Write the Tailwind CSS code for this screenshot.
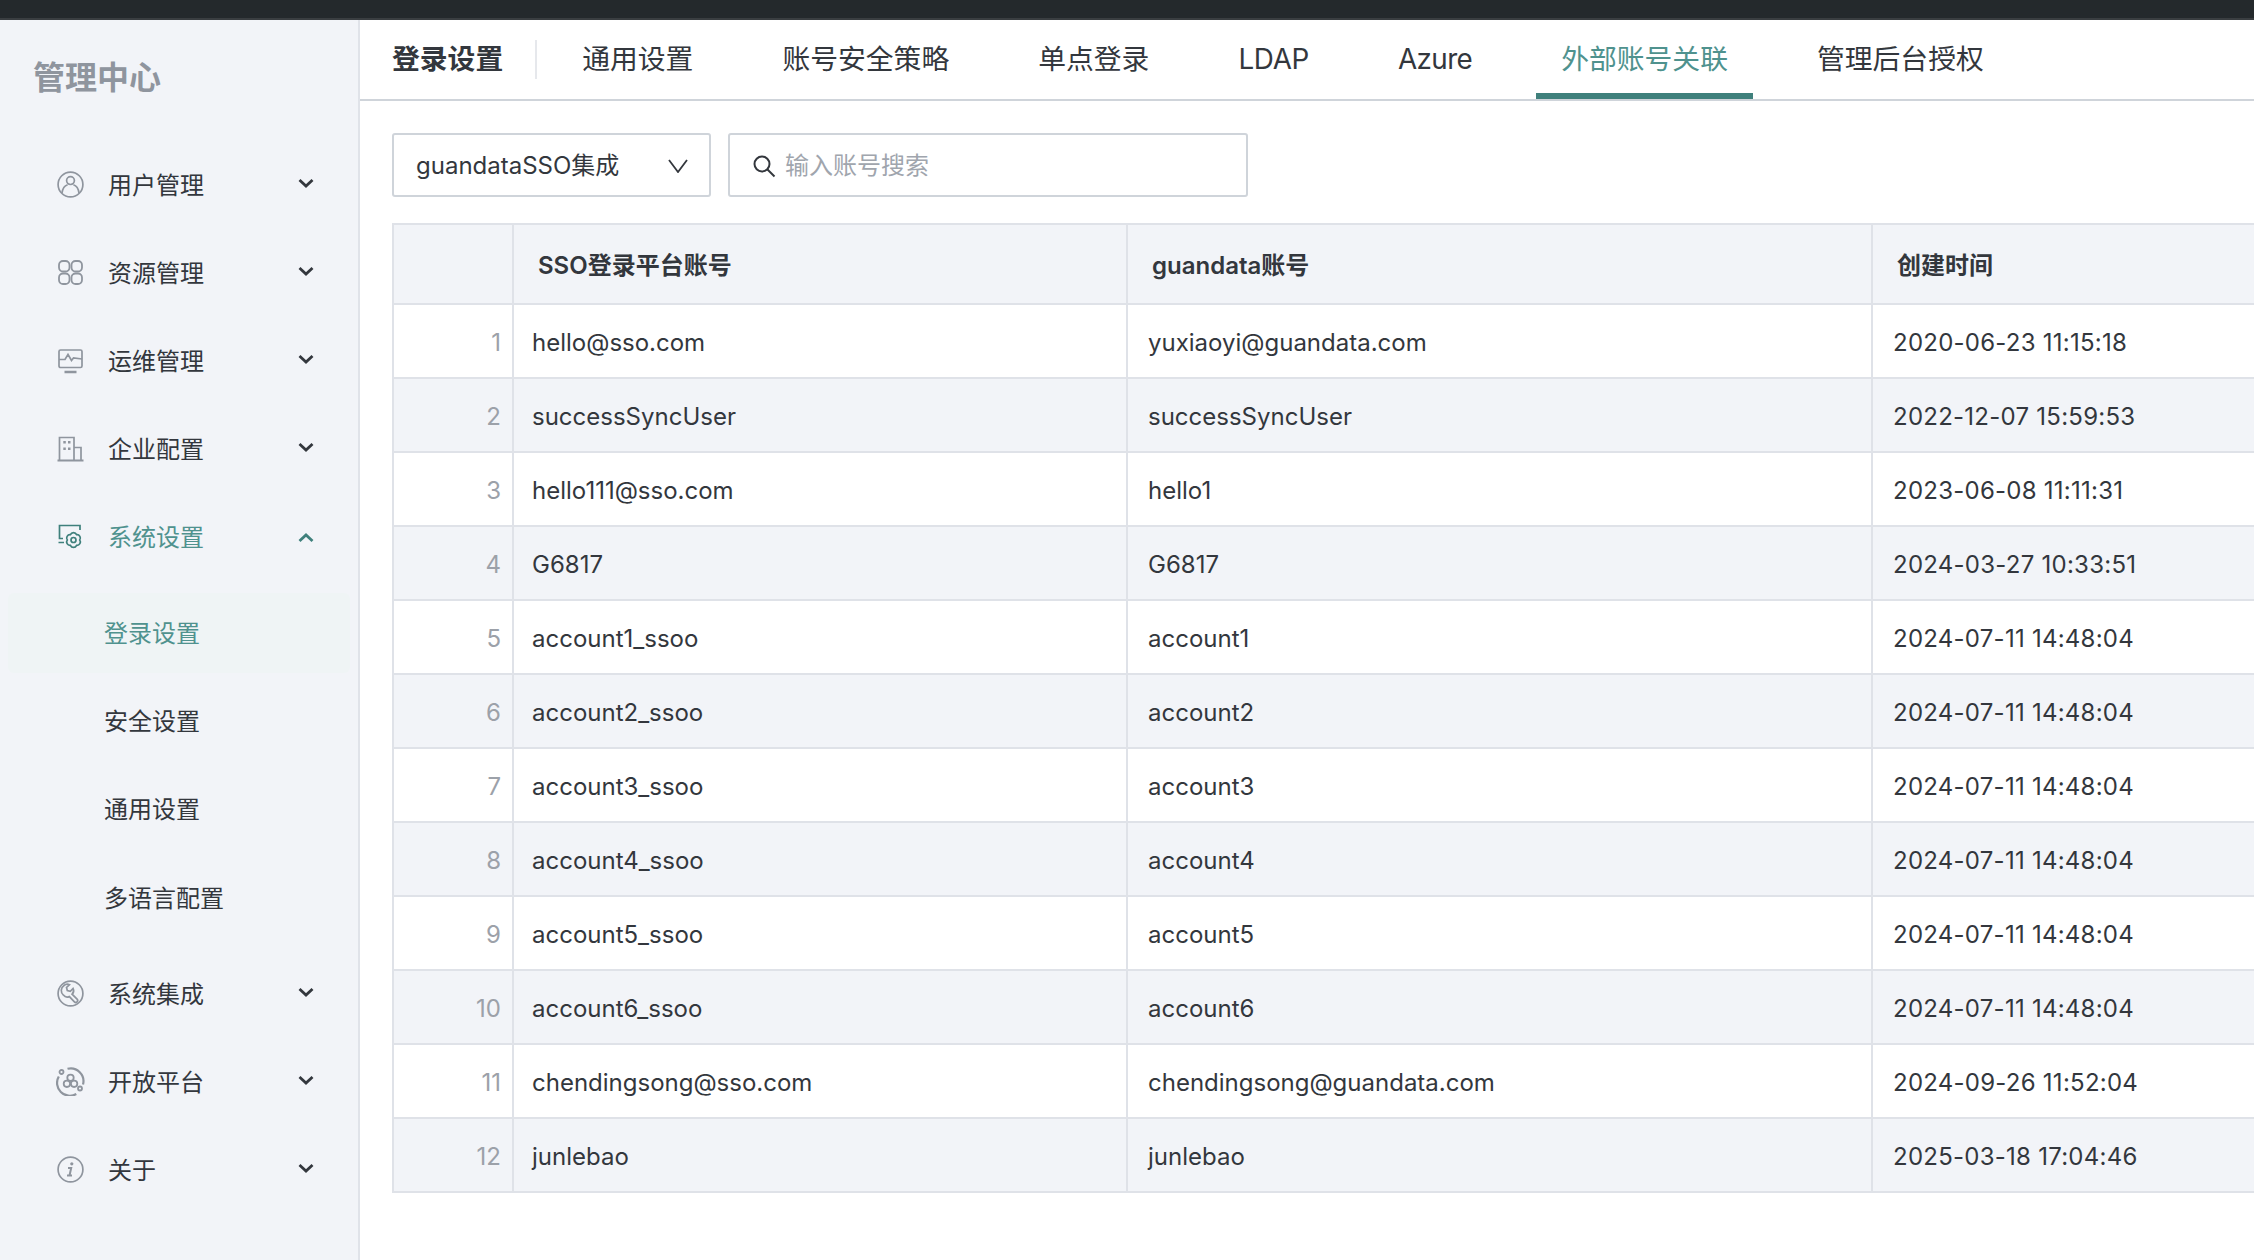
<!DOCTYPE html>
<html lang="zh">
<head>
  <meta charset="UTF-8">
  <title>外部账号关联</title>
  <script src="https://cdn.jsdelivr.net/npm/@tailwindcss/browser@4"></script>
</head>
<body class="h-screen overflow-hidden flex flex-col bg-white text-[24px] text-[#33373d] font-['Inter','Noto_Sans_CJK_SC',sans-serif]">
  <div class="h-[20px] shrink-0 bg-[#24292c] border-b-2 border-[#3a3e41]"></div>
  <div class="flex flex-1 min-h-0">

    <!-- sidebar -->
    <aside class="w-[360px] shrink-0 bg-[#f2f4f8] border-r-2 border-[#e0e3e9]">
      <div class="h-[116px] mb-[4px] pl-[33px] flex items-center text-[32px] font-semibold text-[#8f959e]">管理中心</div>

      <div class="h-[88px] flex items-center pl-[57px] pr-[44px]">
        <svg class="w-[27px] h-[27px] mr-[24px]" viewBox="0 0 27 27" fill="none" stroke="#8f959e" stroke-width="1.7"><circle cx="13.5" cy="13.5" r="12.4"/><circle cx="13.5" cy="9.6" r="3.9"/><path d="M5 22c.6-5 3.4-7.6 5.6-8.3M22 22c-.6-5-3.4-7.6-5.6-8.3"/></svg>
        <span class="flex-1 pt-[3px]">用户管理</span>
        <svg class="w-[16px] h-[12px] -mt-[2px]" viewBox="0 0 16 12" fill="none" stroke="#33373d" stroke-width="2.8"><path d="M1.5 3 8 9l6.500-6"/></svg>
      </div>
      <div class="h-[88px] flex items-center pl-[57px] pr-[44px]">
        <svg class="w-[27px] h-[27px] mr-[24px]" viewBox="0 0 27 27" fill="none" stroke="#8f959e" stroke-width="1.8"><rect x="2" y="2" width="10.500" height="10.500" rx="4"/><rect x="14.500" y="2" width="10.500" height="10.500" rx="4"/><rect x="2" y="14.500" width="10.500" height="10.500" rx="4"/><rect x="14.500" y="14.500" width="10.500" height="10.500" rx="4"/></svg>
        <span class="flex-1 pt-[3px]">资源管理</span>
        <svg class="w-[16px] h-[12px] -mt-[2px]" viewBox="0 0 16 12" fill="none" stroke="#33373d" stroke-width="2.8"><path d="M1.5 3 8 9l6.500-6"/></svg>
      </div>
      <div class="h-[88px] flex items-center pl-[57px] pr-[44px]">
        <svg class="w-[27px] h-[27px] mr-[24px]" viewBox="0 0 27 27" fill="none" stroke="#8f959e" stroke-width="1.7"><rect x="2" y="3" width="23" height="17.500" rx="1.500"/><path d="M2 12.500h6l3-5 3.500 6 2-2.500 8.500 1"/><path d="M7.500 25h12" stroke-width="2.500"/></svg>
        <span class="flex-1 pt-[3px]">运维管理</span>
        <svg class="w-[16px] h-[12px] -mt-[2px]" viewBox="0 0 16 12" fill="none" stroke="#33373d" stroke-width="2.8"><path d="M1.5 3 8 9l6.500-6"/></svg>
      </div>
      <div class="h-[88px] flex items-center pl-[57px] pr-[44px]">
        <svg class="w-[27px] h-[27px] mr-[24px]" viewBox="0 0 27 27" fill="none" stroke="#8f959e" stroke-width="1.7"><path d="M2.500 25V2.500H17V25M17 12.500h7V25"/><path d="M.5 25.500h26" stroke-width="2"/><path d="M6.300 6h2.500v2.500H6.300zM11 6h2.500v2.500H11zM6.300 12.500h2.500V15H6.300zM11 12.500h2.500V15H11z" fill="#8f959e" stroke="none"/></svg>
        <span class="flex-1 pt-[3px]">企业配置</span>
        <svg class="w-[16px] h-[12px] -mt-[2px]" viewBox="0 0 16 12" fill="none" stroke="#33373d" stroke-width="2.8"><path d="M1.5 3 8 9l6.500-6"/></svg>
      </div>
      <div class="h-[88px] flex items-center pl-[57px] pr-[44px] text-[#4f928e]">
        <svg class="w-[27px] h-[27px] mr-[24px]" viewBox="0 0 27 27" fill="none" stroke="#3f807c" stroke-width="1.7"><path d="M23 7V2.500H2.500V15.500H6M1.500 19.500H7"/><path d="M22.700 17A3.400 3.400 0 0 1 19.600 22.370A3.400 3.400 0 0 1 13.400 22.370A3.400 3.400 0 0 1 10.300 17A3.400 3.400 0 0 1 13.400 11.630A3.400 3.400 0 0 1 19.600 11.630A3.400 3.400 0 0 1 22.700 17z"/><circle cx="16.500" cy="17" r="2.500"/></svg>
        <span class="flex-1 pt-[3px]">系统设置</span>
        <svg class="w-[16px] h-[12px] mt-[4px]" viewBox="0 0 16 12" fill="none" stroke="#3f807c" stroke-width="2.8"><path d="M1.500 9 8 3l6.500 6"/></svg>
      </div>

      <div class="pt-[13px] mb-[12px] flex flex-col gap-[8px]">
        <div class="h-[80px] mx-[8px] pl-[96px] pt-[2px] flex items-center rounded-md bg-[#eff4f5] text-[#4f928e]">登录设置</div>
        <div class="h-[80px] mx-[8px] pl-[96px] pt-[2px] flex items-center">安全设置</div>
        <div class="h-[80px] mx-[8px] pl-[96px] pt-[2px] flex items-center">通用设置</div>
        <div class="h-[80px] mx-[8px] pl-[96px] pt-[3px] flex items-center">多语言配置</div>
      </div>

      <div class="h-[88px] flex items-center pl-[57px] pr-[44px]">
        <svg class="w-[27px] h-[27px] mr-[24px]" viewBox="0 0 27 27" fill="none" stroke="#8f959e" stroke-width="1.7"><circle cx="13.500" cy="13.500" r="12.400"/><path d="M7 5.500a5 5 0 0 1 5.500-.8L9.500 7.500l.8 3 3 .8 2.800-2.800a5 5 0 0 1-1 5.700l5 5a1.800 1.800 0 0 1-2.700 2.600l-5-5.200a5 5 0 0 1-6-1.500A6 6 0 0 1 7 5.500z"/></svg>
        <span class="flex-1 pt-[3px]">系统集成</span>
        <svg class="w-[16px] h-[12px] -mt-[2px]" viewBox="0 0 16 12" fill="none" stroke="#33373d" stroke-width="2.8"><path d="M1.500 3 8 9l6.500-6"/></svg>
      </div>
      <div class="h-[88px] flex items-center pl-[56px] pr-[44px]">
        <svg class="w-[29px] h-[29px] mr-[23px]" viewBox="0 0 29 29" fill="none" stroke="#8f959e" stroke-width="1.800"><circle cx="5.500" cy="5" r="2"/><circle cx="24" cy="21.500" r="2"/><path d="M2.800 9.500a12.800 12.800 0 0 0 17.500 17.500M11.500 1.800A12.800 12.800 0 0 1 27 17.500" stroke-width="2.200"/><circle cx="14.500" cy="10.800" r="3.200"/><circle cx="10.900" cy="16.800" r="3.200"/><circle cx="18.100" cy="16.800" r="3.200"/></svg>
        <span class="flex-1 pt-[3px]">开放平台</span>
        <svg class="w-[16px] h-[12px] -mt-[2px]" viewBox="0 0 16 12" fill="none" stroke="#33373d" stroke-width="2.8"><path d="M1.500 3 8 9l6.500-6"/></svg>
      </div>
      <div class="h-[88px] flex items-center pl-[57px] pr-[44px]">
        <svg class="w-[27px] h-[27px] mr-[24px]" viewBox="0 0 27 27" fill="none" stroke="#8f959e" stroke-width="1.7"><circle cx="13.500" cy="13.500" r="12.400"/><circle cx="14.800" cy="7.800" r="1.600" fill="#8f959e" stroke="none"/><path d="M11 12h3.200l-1.700 7.500M10 19.500h5" stroke-width="2"/></svg>
        <span class="flex-1 pt-[3px]">关于</span>
        <svg class="w-[16px] h-[12px] -mt-[2px]" viewBox="0 0 16 12" fill="none" stroke="#33373d" stroke-width="2.8"><path d="M1.500 3 8 9l6.500-6"/></svg>
      </div>
    </aside>

    <!-- main -->
    <main class="flex-1 min-w-0 overflow-hidden">
      <div class="h-[81px] border-b-2 border-[#cfd4da] pl-[32px] flex items-stretch text-[27.8px]">
        <div class="font-semibold pr-[32px] my-[20px] border-r-2 border-[#e6e8ec] flex items-center">登录设置</div>
        <div class="flex gap-[39px] ml-[20px]">
          <div class="px-[25px] h-[79px] pt-[1px] flex items-center">通用设置</div>
          <div class="px-[25px] h-[79px] pt-[1px] flex items-center">账号安全策略</div>
          <div class="px-[25px] h-[79px] pt-[1px] flex items-center">单点登录</div>
          <div class="px-[25px] h-[79px] pt-[1px] flex items-center tracking-[-0.3px]">LDAP</div>
          <div class="px-[25px] h-[79px] pt-[1px] flex items-center tracking-[-0.6px]">Azure</div>
          <div class="px-[25px] h-[79px] pt-[6px] flex items-center text-[#4f928e] border-b-[6px] border-[#3f807c]">外部账号关联</div>
          <div class="px-[25px] h-[79px] pt-[1px] flex items-center">管理后台授权</div>
        </div>
      </div>

      <div class="pl-[32px] pt-[32px] flex gap-[17px]">
        <div class="w-[319px] h-[64px] border-2 border-[#cfd4da] rounded-[3px] pl-[22px] pr-[21px] pt-[1px] flex items-center justify-between">
          <span>guandataSSO集成</span>
          <svg class="w-[20px] h-[14px]" viewBox="0 0 20 14" fill="none" stroke="#33373d" stroke-width="1.800"><path d="m1 1 9 12 9-12"/></svg>
        </div>
        <div class="w-[520px] h-[64px] border-2 border-[#cfd4da] rounded-[3px] pl-[22px] pt-[1px] flex items-center gap-[9px] text-[#a0a5ad]">
          <svg class="w-[24px] h-[24px]" viewBox="0 0 24 24" fill="none" stroke="#33373d" stroke-width="2"><circle cx="10" cy="10" r="7.500"/><path d="m15.500 15.500 7 7"/></svg>
          <span>输入账号搜索</span>
        </div>
      </div>

      <div class="ml-[32px] mt-[26px]">
        <table class="table-fixed w-[1862px] border-separate border-spacing-0 border-t-2 border-l-2 border-[#dfe2e8]">
          <colgroup>
            <col class="w-[120px]"><col class="w-[614px]"><col class="w-[745px]"><col class="w-[381px]">
          </colgroup>
          <thead>
            <tr class="h-[80px] bg-[#f2f4f8] text-left font-semibold">
              <th class="font-semibold border-r-2 border-b-2 border-[#dfe2e8]"></th>
              <th class="font-semibold pl-[24px] pt-[3px] border-r-2 border-b-2 border-[#dfe2e8]">SSO登录平台账号</th>
              <th class="font-semibold pl-[24px] pt-[3px] border-r-2 border-b-2 border-[#dfe2e8]">guandata账号</th>
              <th class="font-semibold pl-[24px] pt-[3px] border-b-2 border-[#dfe2e8]">创建时间</th>
            </tr>
          </thead>
          <tbody id="rows"></tbody>
        </table>
      </div>
    </main>
  </div>

  <script>
    const data = [
      ["hello@sso.com", "yuxiaoyi@guandata.com", "2020-06-23 11:15:18"],
      ["successSyncUser", "successSyncUser", "2022-12-07 15:59:53"],
      ["hello111@sso.com", "hello1", "2023-06-08 11:11:31"],
      ["G6817", "G6817", "2024-03-27 10:33:51"],
      ["account1_ssoo", "account1", "2024-07-11 14:48:04"],
      ["account2_ssoo", "account2", "2024-07-11 14:48:04"],
      ["account3_ssoo", "account3", "2024-07-11 14:48:04"],
      ["account4_ssoo", "account4", "2024-07-11 14:48:04"],
      ["account5_ssoo", "account5", "2024-07-11 14:48:04"],
      ["account6_ssoo", "account6", "2024-07-11 14:48:04"],
      ["chendingsong@sso.com", "chendingsong@guandata.com", "2024-09-26 11:52:04"],
      ["junlebao", "junlebao", "2025-03-18 17:04:46"]
    ];
    document.getElementById("rows").innerHTML = data.map((r, i) => `
      <tr class="h-[74px] ${i % 2 ? "bg-[#f2f4f8]" : "bg-white"}">
        <td class="text-right pr-[11px] pt-[3px] text-[#9ca1a9] border-r-2 border-b-2 border-[#dfe2e8]">${i + 1}</td>
        <td class="pl-[18px] pt-[3px] border-r-2 border-b-2 border-[#dfe2e8]">${r[0]}</td>
        <td class="pl-[20px] pt-[3px] border-r-2 border-b-2 border-[#dfe2e8]">${r[1]}</td>
        <td class="pl-[20px] pt-[3px] tracking-[0.25px] border-b-2 border-[#dfe2e8]">${r[2]}</td>
      </tr>`).join("");
  </script>
</body>
</html>
